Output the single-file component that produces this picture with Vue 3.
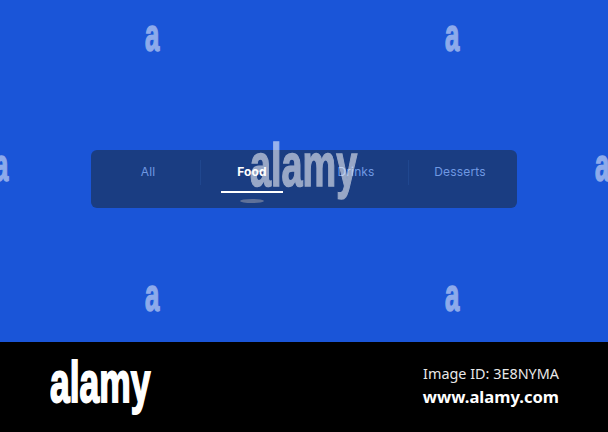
<script setup>
const tabs = [
  {id: 'all', label: 'All'},
  {id: 'food', label: 'Food', active: true},
  {id: 'drinks', label: 'Drinks'},
  {id: 'desserts', label: 'Desserts'}
];

// watermark letters sit on the photo itself, left/top of the box in px
const marks = [
  {x: 145, y: 12},
  {x: 445, y: 12},
  {x: -6, y: 142},
  {x: 595, y: 142},
  {x: 145, y: 272},
  {x: 445, y: 272}
];
</script>

<template>
  <div class="page">
    <main class="stage">
      <nav class="tabs">
        <div v-for="tab in tabs" :key="tab.id" class="tab" :class="{active: tab.active}">
          <span class="label">{{ tab.label }}</span>
          <template v-if="tab.active">
            <span class="underline"></span>
            <span class="glow"></span>
          </template>
        </div>
      </nav>

      <span v-for="(m, i) in marks" :key="i" class="mark" :style="{left: m.x + 'px', top: m.y + 'px'}">a</span>
      <span class="mark-big">alamy</span>
    </main>

    <footer class="footer">
      <span class="logo">alamy</span>
      <div class="meta">
        <div class="image-id">Image ID: 3E8NYMA</div>
        <div class="site">www.alamy.com</div>
      </div>
    </footer>
  </div>
</template>

<style scoped>
.page {
  width: 608px;
  height: 432px;
  display: flex;
  flex-direction: column;
  overflow: hidden;
}

.stage {
  position: relative;
  height: 342px;
  background-color: #1a55d8;
  display: flex;
  justify-content: center;
  padding-top: 150px;
  box-sizing: border-box;
  overflow: hidden;
}

.tabs {
  width: 426px;
  height: 58px;
  box-sizing: border-box;
  padding: 0 5px;
  display: grid;
  grid-template-columns: repeat(4, 104px);
  background-color: #1a3d82;
  border-radius: 6px;
}

.tab {
  position: relative;
  display: flex;
  justify-content: center;
  padding-top: 14px;
  font-family: Inter, "Liberation Sans", sans-serif;
  font-size: 12px;
  line-height: 15px;
  letter-spacing: 0.15px;
  color: #7099e2;
}

.tab.active {
  color: #ffffff;
  font-weight: 700;
}

.tab:nth-child(n + 2)::before {
  content: '';
  position: absolute;
  left: 0;
  top: 10px;
  height: 25px;
  width: 1px;
  background-color: #20478f;
}

.underline {
  position: absolute;
  left: 21px;
  top: 41px;
  width: 62px;
  height: 2px;
  background-color: #ffffff;
}

.glow {
  position: absolute;
  left: 40px;
  top: 49px;
  width: 24px;
  height: 4px;
  border-radius: 50%;
  background-color: #5f7199;
}

.mark,
.mark-big,
.logo {
  font-family: "Liberation Sans", Arial, sans-serif;
  font-weight: 700;
  color: #ffffff;
  transform-origin: left top;
  -webkit-text-stroke: 1.5px currentColor;
}

.mark {
  position: absolute;
  font-size: 46px;
  line-height: 46px;
  opacity: 0.5;
  transform: scaleX(0.56);
}

.mark-big {
  position: absolute;
  left: 250px;
  top: 134px;
  font-size: 62px;
  line-height: 62px;
  opacity: 0.55;
  transform: scaleX(0.61);
}

.footer {
  flex: 1;
  background-color: #000000;
  display: flex;
  justify-content: space-between;
  padding: 0 49px 0 50px;
}

.logo {
  display: block;
  margin-top: 11px;
  width: 102px;
  font-size: 58px;
  line-height: 58px;
  transform: scaleX(0.61);
  white-space: nowrap;
  -webkit-text-stroke-width: 2px;
}

.meta {
  padding-top: 22px;
  text-align: right;
  font-family: "Noto Sans", "Open Sans", sans-serif;
  font-size: 14.4px;
  color: #e8e8e8;
}

.image-id {
  line-height: 20px;
}

.site {
  margin-top: 3px;
  line-height: 20px;
  font-size: 16.6px;
  font-weight: 700;
  color: #ffffff;
}
</style>
